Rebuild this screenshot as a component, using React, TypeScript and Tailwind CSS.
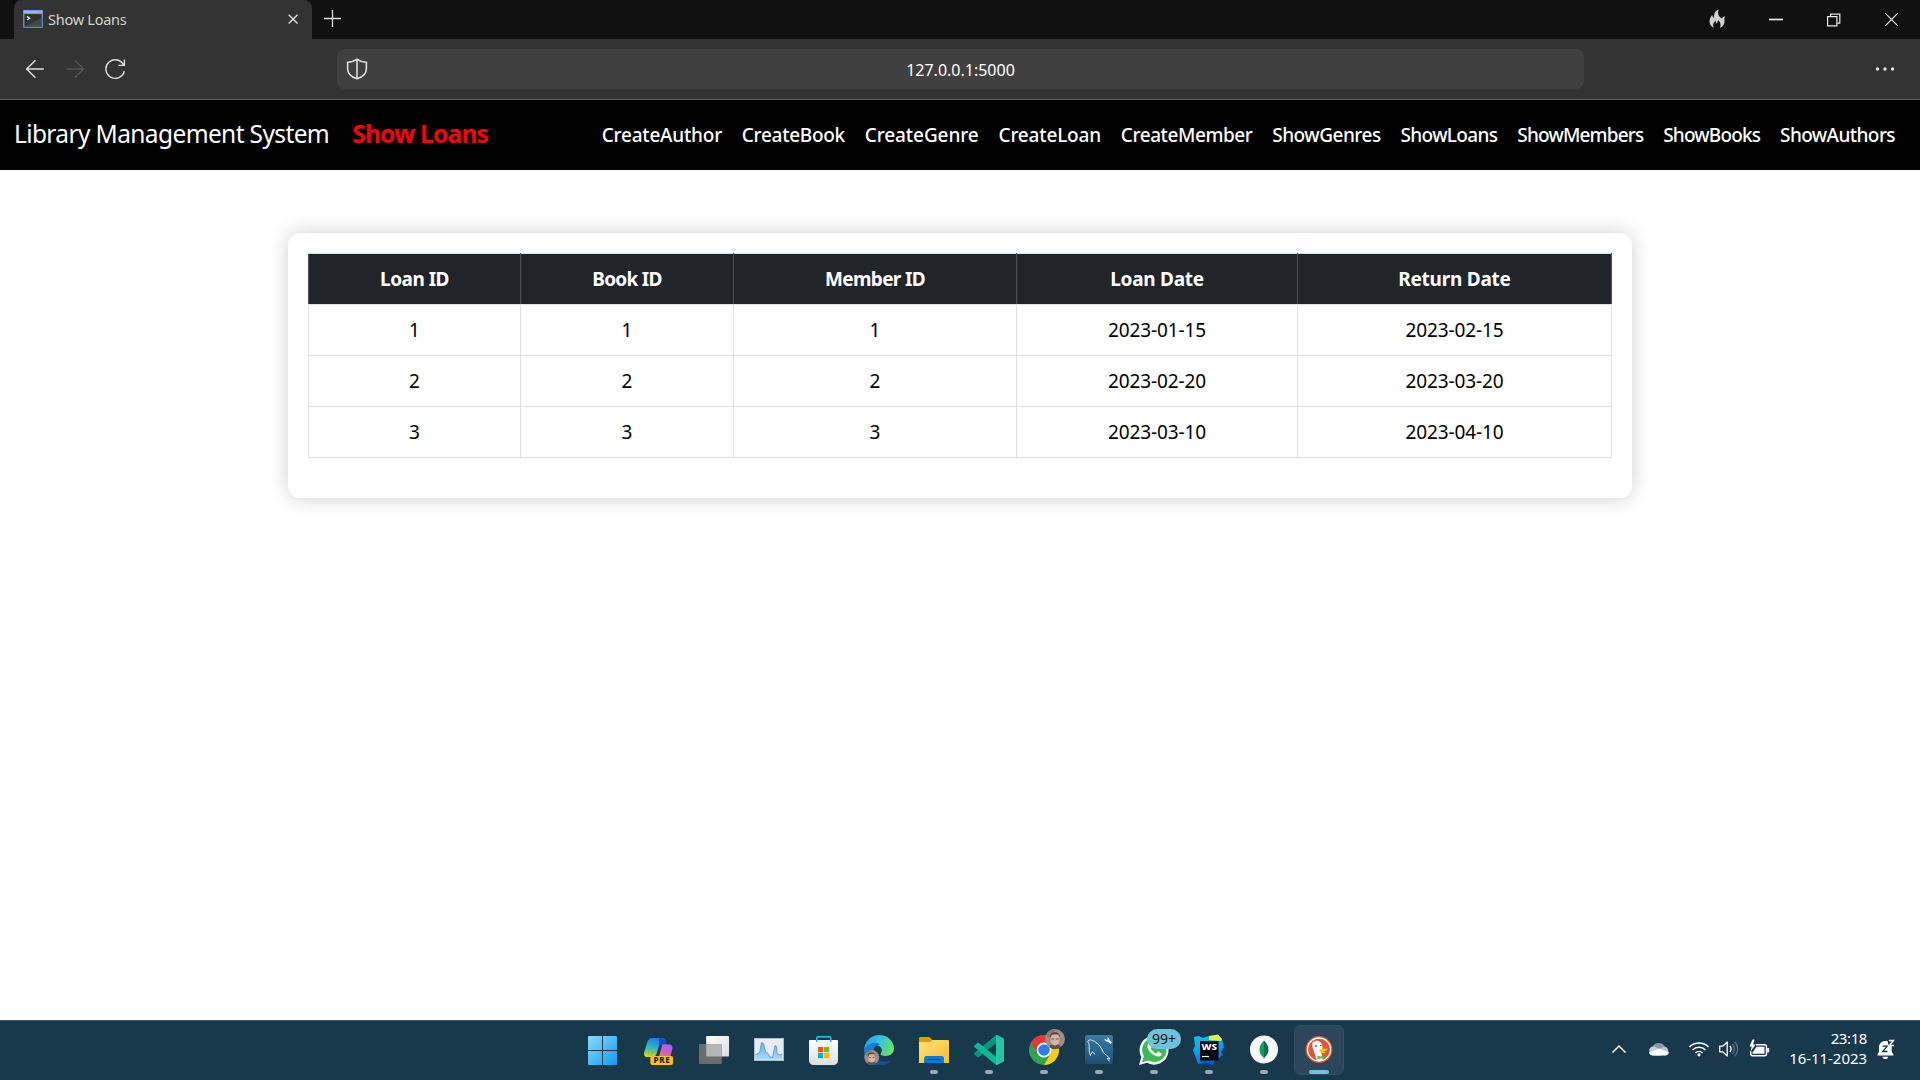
import type { ReactNode } from "react";

const navLinks = [
  { label: "CreateAuthor", tracking: "tracking-[-0.21px]" },
  { label: "CreateBook", tracking: "tracking-[-0.29px]" },
  { label: "CreateGenre", tracking: "tracking-[-0.08px]" },
  { label: "CreateLoan", tracking: "tracking-[-0.17px]" },
  { label: "CreateMember", tracking: "tracking-[-0.43px]" },
  { label: "ShowGenres", tracking: "tracking-[-0.49px]" },
  { label: "ShowLoans", tracking: "tracking-[-0.63px]" },
  { label: "ShowMembers", tracking: "tracking-[-0.83px]" },
  { label: "ShowBooks", tracking: "tracking-[-0.82px]" },
  { label: "ShowAuthors", tracking: "tracking-[-0.58px]" },
];

const columns = [
  { label: "Loan ID", className: "w-[212px] tracking-[-0.5px]" },
  { label: "Book ID", className: "w-[213px] tracking-[-0.7px]" },
  { label: "Member ID", className: "w-[283px] tracking-[-0.65px]" },
  { label: "Loan Date", className: "w-[281px] tracking-[-0.27px]" },
  { label: "Return Date", className: "w-[314px] tracking-[-0.24px]" },
];

const loans = [
  ["1", "1", "1", "2023-01-15", "2023-02-15"],
  ["2", "2", "2", "2023-02-20", "2023-03-20"],
  ["3", "3", "3", "2023-03-10", "2023-04-10"],
];

function TitleBar() {
  return (
    <div className="flex h-[39px] bg-[#111111] pl-[14px]">
      <div className="flex h-full w-[298px] items-center rounded-t-lg bg-[#333333] pr-[12px] pl-[9px]">
        <svg width="20" height="18" viewBox="0 0 20 18" className="mb-px shrink-0">
          <rect width="20" height="18" rx="1" fill="#5d86c4" />
          <rect x="0.5" y="0.5" width="19" height="3" fill="#8fb8ee" />
          <rect x="15.500" y="1" width="3" height="1.500" fill="#d98a94" />
          <rect x="1.500" y="4" width="17" height="12.500" fill="#303234" />
          <path d="M1.500 16.500L18.500 8v8.500z" fill="#45484b" />
          <path d="M4 6.500l2.500 1.700L4 10" stroke="#fff" strokeWidth="1.400" fill="none" />
        </svg>
        <span className="mb-[2px] ml-[5px] flex-1 text-[14.5px] leading-5 tracking-[-0.25px] text-[#d2d2d2]">Show Loans</span>
        <svg width="12" height="12" viewBox="0 0 12 12" stroke="#dcdcdc" strokeWidth="1.400" className="mr-px mb-px">
          <path d="M1.700 1.700l8.800 8.800M10.500 1.700L1.700 10.500" />
        </svg>
      </div>
      <svg width="19" height="19" viewBox="0 0 19 19" stroke="#dedede" strokeWidth="1.300" className="mt-[9px] ml-[11px]">
        <path d="M9.500 1v17M1 9.500h17" />
      </svg>
      <div className="mr-[21px] ml-auto flex items-center">
        <svg width="16" height="20" viewBox="0 0 16 20" fill="#cfcfcf" className="mb-px">
          <path d="M9.800 0.500C6.200 1.600 4.600 4.600 5 9 4 8.400 3.500 7.400 3.200 6 1.500 8 0.400 10.300 0.500 12.600c.1 3.200 1.900 5.300 4.500 6.200-1.600-2.700-.6-5.300 1.600-7 0 1.300.5 2.200 1.200 2.900.5-1 .7-2.300 1.300-3.600 2.200 2 3.300 4.900 1.700 7.700 2.900-.9 4.700-3.100 4.700-6.400 0-2-.2-3.300.4-5.400-1.500.5-2.400 1.300-2.900 2.600C9.800 7.800 8 4.400 9.800.5z" />
        </svg>
        <svg width="16" height="16" viewBox="0 0 16 16" className="ml-[43px]">
          <path d="M1 7.500h14" stroke="#e8e8e8" strokeWidth="1.700" />
        </svg>
        <svg width="16" height="16" viewBox="0 0 16 16" fill="none" stroke="#e6e6e6" strokeWidth="1.200" className="ml-[42px]">
          <path d="M1.600 4.600h9.300v9.300H1.600zM4.600 4.600V2.100h9.200v9.100h-2.700" />
        </svg>
        <svg width="15" height="15" viewBox="0 0 15 15" stroke="#e6e6e6" strokeWidth="1.200" className="ml-[42px]">
          <path d="M1.200 1.200l12.600 12.600M13.800 1.200L1.200 13.800" />
        </svg>
      </div>
    </div>
  );
}

function AddressBar() {
  return (
    <div className="flex h-[61px] items-center border-b border-[#575757] bg-[#333333]">
      <svg width="20" height="20" viewBox="0 0 20 20" fill="none" stroke="#dedede" strokeWidth="1.400" className="ml-[25px]">
        <path d="M18.800 10H1.800M10.500 1.300L1.600 10l8.900 8.700" />
      </svg>
      <svg width="20" height="20" viewBox="0 0 20 20" fill="none" stroke="#555555" strokeWidth="1.400" className="ml-[20px]">
        <path d="M1.500 10h17M9.700 1.300l8.900 8.700-8.900 8.700" />
      </svg>
      <svg width="22" height="22" viewBox="0 0 22 22" fill="none" stroke="#dedede" strokeWidth="1.400" className="ml-[19px]">
        <path d="M20.300 13A9.300 9.300 0 1 1 19.800 7.500M20.400 1.500v5.900h-5.900" />
      </svg>
      <div className="relative ml-[211px] flex h-[40px] w-[1247px] items-center justify-center rounded-lg bg-[#404040]">
        <svg width="22" height="22" viewBox="0 0 22 22" fill="none" stroke="#dedede" strokeWidth="1.600" strokeLinejoin="round" className="absolute top-[9px] left-[9px]">
          <path d="M11 1.200C8.500 3.200 5.300 4.100 1.600 4.200v6.300c0 5 3.500 8.500 9.400 10.300 5.900-1.800 9.400-5.300 9.400-10.300V4.200C16.700 4.100 13.500 3.200 11 1.200zM11 1.500v19" />
        </svg>
        <span className="mt-px text-base text-white">127.0.0.1:5000</span>
      </div>
      <svg width="20" height="6" viewBox="0 0 20 6" fill="#e2e2e2" className="mr-[25px] ml-auto">
        <circle cx="2.500" cy="3" r="1.700" />
        <circle cx="10" cy="3" r="1.700" />
        <circle cx="17.500" cy="3" r="1.700" />
      </svg>
    </div>
  );
}

function SiteNav() {
  return (
    <nav className="flex h-[70px] items-center bg-black pr-[25px] pl-[14px] text-white">
      <span className="mb-[2px] text-[24.5px] leading-8 tracking-[-0.62px]">Library Management System</span>
      <span className="mb-[2px] ml-[23px] text-[24.5px] leading-8 font-bold tracking-[-0.75px] text-[#ff0000]">Show Loans</span>
      <div className="ml-auto flex gap-[19.8px] text-[19px] leading-6 font-medium">
        {navLinks.map((l) => (
          <a key={l.label} className={l.tracking}>
            {l.label}
          </a>
        ))}
      </div>
    </nav>
  );
}

function LoanTable() {
  return (
    <div className="mx-auto mt-[63px] h-[265px] w-[1344px] rounded-xl bg-white pt-5 pl-5 shadow-[0_0_20px_rgba(0,0,0,0.2)]">
      <table className="w-[1304px] table-fixed border-collapse text-center text-[19px] leading-6 text-black">
        <thead>
          <tr className="h-[51px] bg-[#212529] text-white">
            {columns.map((c) => (
              <th key={c.label} className={"border border-x-[#4d5154] border-y-[#dee2e6] p-0 font-bold " + c.className}>
                {c.label}
              </th>
            ))}
          </tr>
        </thead>
        <tbody>
          {loans.map((row) => (
            <tr key={row[0]} className="h-[51px]">
              {row.map((cell, i) => (
                <td key={i} className="border border-[#dee0e2] p-0 tracking-[-0.1px]">
                  {cell}
                </td>
              ))}
            </tr>
          ))}
        </tbody>
      </table>
    </div>
  );
}

function Slot({ children, running, active, badge }: { children: ReactNode; running?: boolean; active?: boolean; badge?: string }) {
  return (
    <div className="relative h-[60px] w-[55px]">
      {active && <div className="absolute top-[5px] left-[2px] h-[50px] w-[50px] rounded-md border border-[#304e62] bg-[#2b475b]" />}
      <svg width="55" height="60" viewBox="0 0 55 60" className="relative block">
        {children}
      </svg>
      {running && <div className="absolute top-[50px] left-[23px] h-1 w-2 rounded-full bg-[#9ba8b2]" />}
      {active && <div className="absolute top-[50px] left-[17px] h-1 w-5 rounded-full bg-[#6fc3d6]" />}
      {badge && (
        <div className="absolute top-[9px] left-[20px] flex h-5 w-[34px] items-center justify-center rounded-full bg-[#6fc3d6] text-[14px] leading-5 text-[#0c1419]">
          {badge}
        </div>
      )}
    </div>
  );
}

function Portrait({ cx, cy, r }: { cx: number; cy: number; r: number }) {
  return (
    <g transform={`translate(${cx} ${cy}) scale(${r / 10})`}>
      <circle r="10" fill="#a08c80" />
      <path d="M-6 8C-5 4 5 4 6 8A10 10 0 0 1-6 8z" fill="#565559" />
      <path d="M-9-4A10 10 0 0 1 0-10L-4 0z" fill="#857d6c" />
      <ellipse cy="0.500" rx="4.600" ry="6" fill="#d9b3a2" />
      <path d="M-5-1.500C-6-8 5-9 5-1.500L3.500-4.500h-6.500z" fill="#5a4437" />
      <path d="M-3.800 0h3M.8 0h3" stroke="#6d5350" strokeWidth="1" />
    </g>
  );
}

function Taskbar() {
  return (
    <div className="relative flex h-[60px] border-t border-[#355264] bg-[#18384c]">
      <div className="-mt-px ml-[577px] flex">
        <Slot>
          <defs>
            <linearGradient id="win" x1="11" y1="16" x2="40" y2="45" gradientUnits="userSpaceOnUse">
              <stop stopColor="#88dcfb" />
              <stop offset="1" stopColor="#1199f5" />
            </linearGradient>
          </defs>
          <path d="M11 17a1 1 0 0 1 1-1h13v14H11zM26 16h13a1 1 0 0 1 1 1v13H26zM11 31h14v14H12a1 1 0 0 1-1-1zM26 31h14v13a1 1 0 0 1-1 1H26z" fill="url(#win)" />
        </Slot>
        <Slot>
          <defs>
            <linearGradient id="copA" x1="0.5" y1="0" x2="0.2" y2="1">
              <stop stopColor="#1c7fe8" />
              <stop offset="0.450" stopColor="#27b0ce" />
              <stop offset="0.750" stopColor="#7cc46a" />
              <stop offset="1" stopColor="#f0cf22" />
            </linearGradient>
            <linearGradient id="copB" x1="0.7" y1="0" x2="0.3" y2="1">
              <stop stopColor="#a463f5" />
              <stop offset="0.500" stopColor="#d95bc5" />
              <stop offset="1" stopColor="#f7806a" />
            </linearGradient>
          </defs>
          <path d="M21 18h9c2 0 3 1.500 3.500 3l1 3.500h-4c-2.500 0-3.500 1.500-4.200 4L24.500 34c-.6 2-2 3-4 3h-5C12.500 37 11.500 35 12.300 32l3-10C16.200 19.500 18 18 21 18z" fill="url(#copA)" />
          <path d="M27 18h3c2 0 3 1.500 3.500 3l1 3.500h-4c-2 0-3 .8-3.700 2.500z" fill="#1a49cf" />
          <path d="M31 24.500h6c2.500 0 4 1.800 3.300 4.300L37.500 40H26l3.500-12.500c.5-1.800 0-2.500 1.500-3z" fill="url(#copB)" />
          <rect x="18.300" y="36" width="22.700" height="9" rx="2" fill="#ffc40c" />
          <text x="29.900" y="43.400" textAnchor="middle" fontSize="8" fontWeight="800" letterSpacing="0.600" fill="#1c1c1c">PRE</text>
        </Slot>
        <Slot>
          <defs>
            <linearGradient id="tv" x1="0" y1="0" x2="1" y2="1">
              <stop stopColor="#fff" />
              <stop offset="1" stopColor="#dcdcdc" />
            </linearGradient>
          </defs>
          <rect x="19.200" y="16" width="22.800" height="20.500" rx="1" fill="url(#tv)" />
          <rect x="12" y="24" width="22.700" height="20" rx="1" fill="#6b6c6e" />
          <path d="M19.200 24h14.500a1 1 0 0 1 1 1v11.500H20.200a1 1 0 0 1-1-1z" fill="#b5b6b7" />
        </Slot>
        <Slot>
          <defs>
            <linearGradient id="perf" x1="0" y1="0" x2="0" y2="1">
              <stop stopColor="#5fb3e6" />
              <stop offset="1" stopColor="#a9daf5" />
            </linearGradient>
          </defs>
          <rect x="12.500" y="18.500" width="29" height="22" fill="#e9ebf0" stroke="#aebdc9" />
          <path d="M13.500 34.500l4-1.500 2-10.500 2 1 2 8 2.500 2 2 3.500 2.500.5 2.500-12 1.500 1 .5 7 3 1.500 2.500-1V39.500h-27z" fill="url(#perf)" />
          <path d="M13.500 34.500l4-1.500 2-10.500 2 1 2 8 2.500 2 2 3.500 2.500.5 2.500-12 1.500 1 .5 7 3 1.500 2.500-1" fill="none" stroke="#429dd6" strokeWidth="0.800" />
        </Slot>
        <Slot>
          <defs>
            <linearGradient id="store" x1="0" y1="0" x2="0" y2="1">
              <stop stopColor="#fff" />
              <stop offset="1" stopColor="#dcdee0" />
            </linearGradient>
          </defs>
          <path d="M12 21a1 1 0 0 1 1-1h27a1 1 0 0 1 1 1v19.500a4.500 4.500 0 0 1-4.500 4.500h-20A4.500 4.500 0 0 1 12 40.500z" fill="url(#store)" />
          <path d="M19.800 22v-4.200c0-.6.400-1 1-1h11.900c.6 0 1 .4 1 1V22" fill="none" stroke="#22b3e4" strokeWidth="1.700" />
          <path d="M21 27h5.200v5.200H21z" fill="#f25022" />
          <path d="M27 27h5.200v5.200H27z" fill="#7fba00" />
          <path d="M21 33h5.200v5.200H21z" fill="#00a4ef" />
          <path d="M27 33h5.200v5.200H27z" fill="#ffb900" />
        </Slot>
        <Slot>
          <defs>
            <linearGradient id="edgeTop" x1="0" y1="0.300" x2="1" y2="0.600">
              <stop stopColor="#2b9ee6" />
              <stop offset="0.500" stopColor="#35c3dc" />
              <stop offset="1" stopColor="#6ae65a" />
            </linearGradient>
            <linearGradient id="edgeLow" x1="0" y1="0" x2="1" y2="1">
              <stop stopColor="#1b84dc" />
              <stop offset="1" stopColor="#0c5bb5" />
            </linearGradient>
          </defs>
          <path d="M12 31C12 22 18.500 15 27 15s15 6 15 13.500c0 4.500-3.500 7.500-8.500 7.500-3 0-5-1-5-2 0-.8 1.300-1.500 1.300-3.700 0-3-3-5.300-6.800-5.300-5 0-10 2.500-11 6z" fill="url(#edgeTop)" />
          <path d="M12 30c.7-3.500 5.500-7.300 11-7.300 2 0 4 .6 5.400 1.800C24 24.200 21.500 28 21.500 32c0 6 5 10 11.500 10 2.500 0 4.500-.7 6-1.600C36.300 43.500 32 45 27 45c-8.500 0-15-6.500-15-15z" fill="url(#edgeLow)" />
          <path d="M22 29.500c-1.300 6 3.500 12 10.500 12.300 3 0 5-.8 7-2C36 44.500 31 46 25.500 44.500 20 41 18.500 34 22 29.500z" fill="#134f9c" />
          <Portrait cx={19.700} cy={37.500} r={7.500} />
        </Slot>
        <Slot running>
          <defs>
            <linearGradient id="folder" x1="0" y1="0" x2="1" y2="1">
              <stop stopColor="#ffe27a" />
              <stop offset="1" stopColor="#fbbd27" />
            </linearGradient>
          </defs>
          <path d="M12 30V18.500c0-.8.700-1.500 1.500-1.500h8c.8 0 1.300.3 1.800.8l2 2.200H40.500c.8 0 1.500.7 1.500 1.500V30z" fill="#dd9b0a" />
          <path d="M12 22h11l2.500-2H40.500c.8 0 1.500.7 1.500 1.500V43H12z" fill="url(#folder)" />
          <path d="M17 43v-4.500a2.500 2.500 0 0 1 2.500-2.500h15a2.500 2.500 0 0 1 2.500 2.500V43z" fill="#1479cd" />
          <path d="M20.500 39.500h13" stroke="#0a4c8f" strokeWidth="1.100" />
        </Slot>
        <Slot running>
          <path d="M12.600 34.600l2.600 2.300c.5.400 1.100.4 1.600 0L35 22.500V15c-.8.100-1.300.4-1.800.8L12.600 32.800c-.6.600-.6 1.300 0 1.800z" fill="#0b957c" />
          <path d="M12.600 25.400l2.600-2.300c.5-.4 1.100-.4 1.600 0L35 37.500V45c-.8-.1-1.300-.4-1.800-.8L12.600 27.200c-.6-.6-.6-1.300 0-1.800z" fill="#10b896" />
          <path d="M34 15.300c.4-.3 1-.3 1.500-.1l5.500 2.700c.6.300 1 .9 1 1.600v21c0 .7-.4 1.300-1 1.600l-5.500 2.700c-.5.200-1.100.2-1.500-.1z" fill="#27c3a8" />
        </Slot>
        <Slot running>
          <circle cx="27" cy="30" r="15" fill="#2da44e" />
          <path d="M14 22.500A15 15 0 0 1 40 22.500H27l-6.500 11.300z" fill="#e5392f" />
          <path d="M27 45l6.500-11.200L34 22.500h6A15 15 0 0 1 27 45z" fill="#fcc91f" />
          <circle cx="27" cy="30" r="7.400" fill="#fff" />
          <circle cx="27" cy="30" r="5.800" fill="#2f7cec" />
          <Portrait cx={38} cy={19} r={10} />
        </Slot>
        <Slot running>
          <defs>
            <linearGradient id="sql" x1="0" y1="0" x2="0" y2="1">
              <stop stopColor="#3c7aa5" />
              <stop offset="1" stopColor="#1d4f75" />
            </linearGradient>
          </defs>
          <rect x="13" y="15" width="28" height="29" rx="2" fill="url(#sql)" />
          <path d="M18.500 35.500c-1.800-3.500-1.200-7-1.300-10-.1-2.400-1.700-3.300-1.200-4.700 1-1.700 4-.8 6.500.6 4.500 2.400 7 6.600 8.800 11 1.500 2.600 4.500 2.600 6.500 6.600l-2.700-.7 2.300 3M18.500 35.500l1.800-3.800 2.700 2.800" fill="none" stroke="#dbe7ef" strokeWidth="1" strokeLinejoin="round" />
          <path d="M32.300 18.500l2.200 1.500 1.300-1-.8-1.800c1.700.2 2.700 1.400 2.600 3l2.400 2.300-1.400 1.500-2.500-2.300c-2 .2-3.700-1-3.800-3.200z" fill="#e4edf3" />
        </Slot>
        <Slot running badge="99+">
          <path d="M12 45l2.300-8A14.500 14.500 0 1 1 20 42.800z" fill="#fff" />
          <path d="M15 42.200l1.800-6.200a12.200 12.200 0 1 1 4.600 4.500z" fill="#3dbb4e" />
          <path d="M22.200 23.200c-1.200.6-1.900 1.800-1.800 3.300.4 4.600 6.800 10.400 11.300 10 1.600-.2 3-1.200 3.100-3.100l-3.700-2-1.900 2c-2.600-1-4.500-3-5.600-5.200l1.400-1.700-1.500-3.300z" fill="#fff" />
        </Slot>
        <Slot running>
          <defs>
            <linearGradient id="ws" x1="0" y1="0" x2="0.300" y2="1">
              <stop stopColor="#17c4ea" />
              <stop offset="0.500" stopColor="#08a5ee" />
              <stop offset="1" stopColor="#0b6df2" />
            </linearGradient>
          </defs>
          <path d="M12 17l5-1 4 2 6-2 3 1 6-2 4 4 2 8-3 5 2 3-5 4-4 1-1 5-7-3-8 2-2-6-3-8 2-4z" fill="url(#ws)" />
          <path d="M27 16l9-1.500 4 4.500-1 2-12-1z" fill="#e9ee3c" />
          <path d="M19 40h12l-1 5-5-2-6 1z" fill="#0b52e0" />
          <rect x="18" y="21" width="18.500" height="19.500" fill="#060606" />
          <text x="19.500" y="29.800" fontSize="9.200" fontWeight="800" fill="#fff" textLength="15.500" lengthAdjust="spacingAndGlyphs">WS</text>
          <path d="M20 36.500h7" stroke="#fff" strokeWidth="1.200" />
        </Slot>
        <Slot running>
          <circle cx="27" cy="29.500" r="14" fill="#f8f9f8" />
          <path d="M27 20.500c-3.300 3-4.500 6-4.500 9.500 0 3.300 1.700 5.700 4 7.500l.5 1.500z" fill="#12a05c" />
          <path d="M27 20.500c3.300 3 4.500 6 4.500 9.500 0 3.300-1.700 5.700-4 7.500L27 39z" fill="#05704b" />
        </Slot>
        <Slot active>
          <circle cx="27" cy="29.500" r="13.500" fill="#de5833" />
          <circle cx="27" cy="29.500" r="11.500" fill="none" stroke="#fff" strokeWidth="1.300" />
          <path d="M20.500 23c.5-1.500 3.500-2.700 5.700-2 3 1 4.300 3.500 4.300 7l-1 6 1.500 6.300c-2.300.7-4.500.6-6.300-.1-1-5-3.700-10.500-4.200-13.700-.2-1.500-.4-2.500 0-3.500z" fill="#fff" />
          <path d="M27.500 29.700c2-1 5-.8 8.500-1.200l-1.500 1.900-3.500.8 3 .8-1.500 1.200c-3 .6-5.500-1-5-3.500z" fill="#fdc61d" />
          <path d="M25.500 35.500l3 1 4-1.200.5 4-4-1-3.500 1.200z" fill="#5fbb46" />
          <circle cx="24" cy="26" r="0.900" fill="#2d4f8e" />
          <circle cx="28.800" cy="25.500" r="0.800" fill="#2d4f8e" />
        </Slot>
      </div>
      <div className="mr-[25px] mb-[3px] ml-auto flex items-center text-white">
        <svg width="16" height="10" viewBox="0 0 16 10" fill="none" stroke="#fff" strokeWidth="1.500" className="mr-[21px]">
          <path d="M1.500 8.500L8 2l6.500 6.500" />
        </svg>
        <svg width="22" height="14" viewBox="0 0 22 14" className="mr-[18px]">
          <path d="M4.500 5A7 7 0 0 1 16.800 4.500L11 11z" fill="#8b9ba6" />
          <path d="M5 13.500A4.600 4.600 0 0 1 4.800 4.500c1.200 0 2.200.3 3 .8L16 10l-3 3.500z" fill="#c9d1d6" />
          <path d="M15.500 4.500a4.600 4.600 0 0 1 1.500 9L9 10z" fill="#b9c4cb" />
          <path d="M5 13.500C3 13.500 1.500 12.500 1 10.700L11.500 6.500 21 10.500c-.6 2-2 3-4 3z" fill="#fff" />
        </svg>
        <svg width="22" height="16" viewBox="0 0 22 16" fill="none" stroke="#fff" strokeWidth="1.500" className="mr-[8px]">
          <path d="M1.500 6A13.500 13.500 0 0 1 20.500 6M4.500 9a9.200 9.200 0 0 1 13 0M7.500 12a5 5 0 0 1 7 0" />
          <circle cx="11" cy="13.800" r="1.600" fill="#fff" stroke="none" />
        </svg>
        <svg width="22" height="18" viewBox="0 0 22 18" fill="none" strokeWidth="1.300" className="mr-[8px]">
          <path d="M1.700 6.200h3L9.200 2v14l-4.500-4.200h-3z" stroke="#fff" strokeLinejoin="round" />
          <path d="M11.800 6a4.500 4.500 0 0 1 0 6" stroke="#fff" />
          <path d="M14.300 3.800a7.500 7.500 0 0 1 0 10.400M16.800 1.800a10.500 10.500 0 0 1 0 14.400" stroke="#5a7383" />
        </svg>
        <svg width="22" height="20" viewBox="0 0 22 20" className="mr-[17px]">
          <path d="M8 5.700h8.500a2 2 0 0 1 2 2v7a2 2 0 0 1-2 2H4.700a2 2 0 0 1-2-2v-2.500" fill="none" stroke="#fff" strokeWidth="1.400" />
          <path d="M8.500 7.700h8v7h-12l.2-1.500z" fill="#fff" />
          <path d="M19.200 9h1.200c.5 0 .8.300.8.800v2.800c0 .5-.3.800-.8.800h-1.200z" fill="#fff" />
          <path d="M4.500.5L1.500 7.500h2.200L2.500 12.500 7.700 5.500H5.200L6.500.5z" fill="#fff" />
        </svg>
        <div className="-mt-[2px] flex w-[80px] flex-col items-end text-[15px] leading-5">
          <span className="tracking-[-0.4px]">23:18</span>
          <span className="tracking-[-0.05px]">16-11-2023</span>
        </div>
        <svg width="18" height="21" viewBox="0 0 18 21" className="ml-[10px]">
          <path d="M2 8.500C2 4.500 4.700 2 8.300 2 12 2 14.700 4.500 14.700 8.500v4.300l1.800 2.700v1H.5v-1L2 12.800zM5.500 17.700h5.700c-.4 1.500-1.400 2.300-2.900 2.300s-2.400-.8-2.800-2.300z" fill="#fff" />
          <path d="M5.500 7.200h4.700l-4.500 5.300h4.800" fill="none" stroke="#18384c" strokeWidth="1.300" />
          <path d="M11 0h7v7h-5.500L11 5z" fill="#18384c" />
          <path d="M12 1.500h4.500L12.200 6.500h4.600" fill="none" stroke="#fff" strokeWidth="1.400" />
        </svg>
      </div>
    </div>
  );
}

export default function App() {
  return (
    <div className="flex h-[1080px] w-[1920px] flex-col overflow-hidden bg-white font-['Noto_Sans','Open_Sans',sans-serif]">
      <TitleBar />
      <AddressBar />
      <SiteNav />
      <main className="flex-1">
        <LoanTable />
      </main>
      <Taskbar />
    </div>
  );
}
